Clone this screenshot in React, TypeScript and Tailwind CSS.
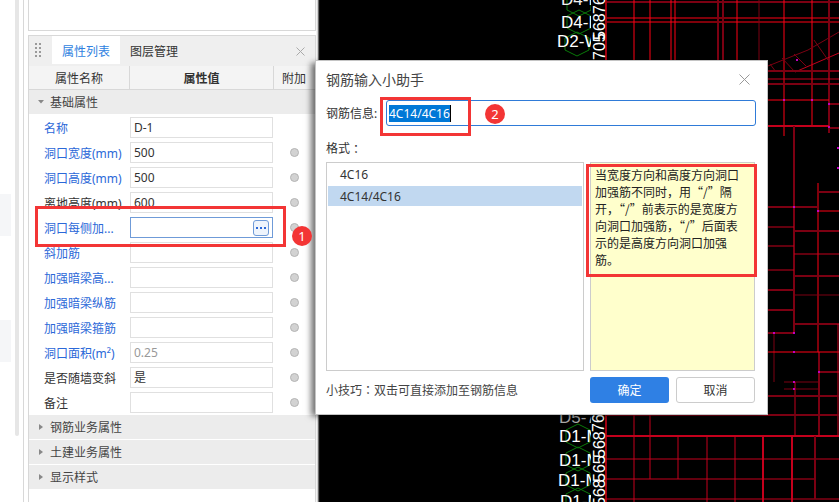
const RED = "#ff0014";
const MID = "#c4001c";
const DIM = "#7c0012";

// x1, y1, x2, y2, colour, width
type Seg = [number, number, number, number, string, number?];

const SEGS: Seg[] = [
  // upper band
  [606, 2, 839, 2, DIM, 2],
  [606, 18, 839, 18, RED],
  [606, 22, 839, 22, RED],
  [634, 0, 634, 60, RED],
  [650, 0, 650, 60, RED],
  [671, 0, 671, 60, RED],
  [675, 0, 675, 60, RED],
  [718, 0, 718, 60, DIM, 2],
  [723, 0, 723, 60, DIM, 2],
  [737, 0, 737, 60, RED],
  [759, 0, 759, 60, DIM],
  [784, 0, 784, 136, RED],
  [812, 0, 812, 126, RED],
  [829, 0, 829, 133, DIM, 2],
  // skewed block
  [768, 66, 808, 50, DIM],
  [770, 64, 776, 72, DIM],
  [782, 58, 795, 72, DIM],
  [794, 54, 806, 66, DIM],
  [808, 50, 839, 32, DIM],
  [795, 72, 839, 53, MID],
  [814, 40, 828, 60, DIM],
  // right of the dialog
  [768, 71, 839, 71, DIM, 2],
  [768, 79, 839, 79, MID],
  [768, 84, 839, 84, DIM, 2],
  [768, 100, 829, 100, RED],
  [829, 104, 839, 104, DIM, 2],
  [768, 126, 829, 126, MID, 2],
  [829, 128, 839, 128, DIM, 2],
  [794, 126, 794, 333, DIM, 2],
  [818, 183, 818, 352, RED],
  [819, 352, 819, 436, DIM, 2],
  [818, 192, 839, 192, DIM, 2],
  [818, 211, 839, 211, RED],
  [768, 207, 818, 207, DIM, 2],
  [768, 227, 794, 227, MID],
  [794, 231, 839, 231, DIM, 2],
  [768, 246, 794, 246, MID],
  [794, 254, 839, 254, MID],
  [768, 270, 794, 270, MID],
  [794, 276, 839, 276, DIM, 2],
  [768, 290, 794, 290, DIM, 2],
  [794, 295, 839, 295, DIM],
  [768, 310, 794, 310, DIM, 2],
  [794, 324, 839, 324, DIM, 2],
  [768, 333, 794, 333, DIM, 2],
  [774, 333, 774, 382, DIM],
  [768, 352, 839, 352, RED],
  [819, 372, 839, 372, DIM, 2],
  [838, 324, 838, 436, MID],
  [784, 382, 818, 382, DIM],
  [784, 389, 818, 389, DIM],
  [795, 382, 795, 436, MID],
  [768, 396, 839, 396, DIM, 2],
  // below the dialog
  [606, 0, 606, 502, "#a00010", 2],
  [606, 415, 839, 415, DIM, 2],
  [606, 436, 839, 436, MID, 2],
  [606, 459, 839, 459, MID],
  [606, 479, 815, 479, MID],
  [606, 499, 839, 499, MID],
  [634, 415, 634, 502, MID],
  [650, 415, 650, 479, MID],
  [678, 436, 678, 479, MID],
  [707, 436, 707, 502, MID],
  [735, 436, 735, 502, MID],
  [763, 436, 763, 502, MID, 2],
  [792, 436, 792, 502, MID, 2],
  [815, 436, 815, 499, DIM, 2],
];

const NODES = [
  [784, 100], [812, 100], [829, 104], [829, 127], [794, 207], [818, 211],
  [838, 148], [838, 168], [774, 333], [794, 333], [794, 352], [794, 382],
  [794, 389], [819, 372], [797, 60],
];

const LABELS: [string, number, number, string][] = [
  ["D4-B", 561, 5, "#f2f2f2"],
  ["D4-B", 561, 28, "#ffffff"],
  ["D2-W", 557, 47, "#ffffff"],
  ["D5-7", 559, 423, "#a8a8a8"],
  ["D1-M", 559, 442, "#ffffff"],
  ["D1-M", 559, 466, "#ffffff"],
  ["D1-M", 558, 486, "#ffffff"],
  ["D1-M", 560, 507, "#ffffff"],
];

const HEXES: [number, number][] = [
  [579, 4], [579, 22], [577, 44], [578, 436], [578, 459], [578, 479], [578, 500],
];

// rotated bar marks beside the label column
const MARKS: [string, number, number][] = [
  ["76", 605, 14],
  ["568", 605, 40],
  ["705", 605, 60],
  ["765", 604, 432],
  ["568", 605, 458],
  ["565", 605, 482],
  ["568", 605, 506],
];

function hexPoints(cx: number, cy: number) {
  const r = 12;
  return [
    [cx - r, cy - 6],
    [cx, cy - r],
    [cx + r, cy - 6],
    [cx + r, cy + 6],
    [cx, cy + r],
    [cx - r, cy + 6],
  ]
    .map((p) => p.join(","))
    .join(" ");
}

function CadCanvas() {
  return (
    <div className="h-full flex-1 bg-black">
      <svg viewBox="320 0 519 502" className="block h-full w-full">
        {SEGS.map(([x1, y1, x2, y2, c, w], i) => (
          <line key={i} x1={x1} y1={y1} x2={x2} y2={y2} stroke={c} strokeWidth={w ?? 1} />
        ))}
        {NODES.map(([x, y], i) => (
          <rect key={i} x={x - 1} y={y - 1} width={2} height={2} fill="#c000c0" />
        ))}
        {HEXES.map(([x, y], i) => (
          <polygon key={i} points={hexPoints(x, y)} fill="none" stroke="#0a7a0a" />
        ))}
        {LABELS.map(([t, x, y, c], i) => (
          <text key={i} x={x} y={y} fill={c} fontSize={17} fontFamily="Liberation Sans, sans-serif">
            {t}
          </text>
        ))}
        {/* marks sit on top of the label ends */}
        <rect x={591} y={0} width={14} height={502} fill="black" />
        {MARKS.map(([t, x, y], i) => (
          <text
            key={i}
            transform={`translate(${x} ${y}) rotate(-90)`}
            fill="#ffffff"
            fontSize={16}
            fontFamily="Liberation Sans, sans-serif"
          >
            {t}
          </text>
        ))}
      </svg>
    </div>
  );
}

const BLUE = "text-[#2b68d8]";
const DARK = "text-[#333333]";

const ROWS: { label: string; value?: string; link: boolean; grey?: boolean; noDot?: boolean; active?: boolean }[] = [
  { label: "名称", value: "D-1", link: true, noDot: true },
  { label: "洞口宽度(mm)", value: "500", link: true },
  { label: "洞口高度(mm)", value: "500", link: true },
  { label: "离地高度(mm)", value: "600", link: false },
  { label: "洞口每侧加...", link: true, active: true },
  { label: "斜加筋", link: true },
  { label: "加强暗梁高...", link: true },
  { label: "加强暗梁纵筋", link: true },
  { label: "加强暗梁箍筋", link: true },
  { label: "洞口面积(m²)", value: "0.25", link: true, grey: true },
  { label: "是否随墙变斜", value: "是", link: false },
  { label: "备注", link: false },
];

function PropertyRow({ row }: { row: (typeof ROWS)[number] }) {
  return (
    <div className="flex h-[25px] items-center">
      <div className={`w-[101px] shrink-0 pl-[15px] pt-[2px] whitespace-nowrap ${row.link ? BLUE : DARK}`}>{row.label}</div>
      <div
        className={`flex h-[21px] w-[143px] shrink-0 items-center justify-between border pl-[3px] pr-[3px] ${
          row.active ? "border-[#6f9bd8]" : "border-[#e0e0e0]"
        } ${row.grey ? "text-[#999999]" : DARK}`}
      >
        <span className="pt-px">{row.value}</span>
        {row.active && (
          <span className="flex h-[16px] w-[16px] items-center justify-center gap-[2px] rounded-[3px] border border-[#6f9bd8] bg-[#eef4fc]">
            <i className="h-[2px] w-[2px] bg-[#2b68d8]" />
            <i className="h-[2px] w-[2px] bg-[#2b68d8]" />
            <i className="h-[2px] w-[2px] bg-[#2b68d8]" />
          </span>
        )}
      </div>
      <div className="flex flex-1 justify-center">
        {!row.noDot && <span className="h-[9px] w-[9px] rounded-full border border-[#b4b4b4] bg-[#d2d2d2]" />}
      </div>
    </div>
  );
}

function GroupHeader({ title, open }: { title: string; open?: boolean }) {
  return (
    <div className={`flex h-[24px] items-center bg-[#ececec] text-[#444444] ${open ? "" : "mb-px"}`}>
      <div className="flex w-[21px] justify-end pr-[6px]">
        <svg width="6" height="6" viewBox="0 0 6 6">
          {open ? <polygon points="0,1 6,1 3,4.5" fill="#888888" /> : <polygon points="1,0 5,3 1,6" fill="#888888" />}
        </svg>
      </div>
      <span className="pt-[2px]">{title}</span>
    </div>
  );
}

function PropertyPanel() {
  return (
    <div className="flex h-full w-[288px] shrink-0 flex-col">
      <div className="h-[31px] shrink-0 border-x border-b border-[#d8d8d8]" />
      <div className="mt-[4px] flex-1 border-x border-t border-[#d8d8d8] bg-white">
        <div className="flex h-[30px] items-start bg-[#efefef]">
          <div className="grid w-[23px] grid-cols-[2px_2px] gap-x-[2px] gap-y-[2px] pl-[6px] pt-[7px]">
            {[0, 1, 2, 3, 4, 5, 6, 7].map((i) => (
              <i key={i} className="h-[2px] w-[2px] bg-[#9a9a9a]" />
            ))}
          </div>
          <div className="flex h-[28px] w-[68px] items-center justify-center bg-white pt-[3px] text-[#2f7fe0]">属性列表</div>
          <div className="ml-[10px] flex h-[28px] items-center pt-[3px] text-[#333333]">图层管理</div>
          <svg className="ml-auto mr-[10px] mt-[11px]" width="9" height="9" viewBox="0 0 9 9">
            <path d="M0.5 0.5 L8.5 8.5 M8.5 0.5 L0.5 8.5" stroke="#aaaaaa" fill="none" />
          </svg>
        </div>
        <div className="flex h-[24px] items-center border-b border-[#d8d8d8] bg-[#f4f4f4] text-[#333333]">
          <div className="flex h-full w-[101px] shrink-0 items-center justify-center border-r border-[#d8d8d8] pt-[2px]">属性名称</div>
          <div className="flex h-full w-[144px] shrink-0 items-center justify-center border-r border-[#d8d8d8] pt-[2px] font-bold">属性值</div>
          <div className="flex-1 pl-[8px] pt-[2px] whitespace-nowrap">附加</div>
        </div>
        <GroupHeader title="基础属性" open />
        <div className="pt-px">
          {ROWS.map((row) => (
            <PropertyRow key={row.label} row={row} />
          ))}
        </div>
        <GroupHeader title="钢筋业务属性" />
        <GroupHeader title="土建业务属性" />
        <GroupHeader title="显示样式" />
      </div>
    </div>
  );
}

const HELP_LINES = [
  "当宽度方向和高度方向洞口",
  "加强筋不同时，用“/”隔",
  "开，“/”前表示的是宽度方",
  "向洞口加强筋，“/”后面表",
  "示的是高度方向洞口加强",
  "筋。",
];

// traditional-form glyphs centre the colon in its cell
function Colon() {
  return <span className="font-['Noto_Sans_CJK_TC',sans-serif]">：</span>;
}

function RebarDialog() {
  return (
    <div className="absolute left-[315px] top-[60px] flex h-[355px] w-[453px] flex-col border border-[#c4c4c4] bg-white px-[10px] text-[#333333] shadow-[-5px_2px_6px_-1px_rgba(0,0,0,0.55)]">
      <div className="flex h-[39px] shrink-0 items-center justify-between pb-[2px] text-[14px] text-[#444444]">
        钢筋输入小助手
        <svg className="mr-[7px]" width="11" height="11" viewBox="0 0 11 11">
          <path d="M0.5 0.5 L10.5 10.5 M10.5 0.5 L0.5 10.5" stroke="#999999" fill="none" />
        </svg>
      </div>
      <div className="flex h-[26px] shrink-0 items-center">
        <span className="w-[60px] shrink-0 pt-px">钢筋信息:</span>
        <div className="flex h-full w-[370px] items-center rounded-[3px] border border-[#2f7bd8] pl-[2px]">
          <span className="bg-[#0078d7] pt-px leading-[16px] text-white">4C14/4C16</span>
          <i className="h-[17px] w-px bg-black" />
        </div>
      </div>
      <div className="flex h-[36px] shrink-0 items-center pt-[10px]">
        格式
        <Colon />
      </div>
      <div className="flex h-[209px] shrink-0 gap-[6px]">
        <div className="flex w-[258px] flex-col gap-[2px] border border-[#cccccc] p-px">
          <div className="flex h-[20px] items-center pl-[12px] pt-px">4C16</div>
          <div className="flex h-[20px] items-center bg-[#c1d8f0] pl-[12px] pt-px">4C14/4C16</div>
        </div>
        <div className="w-[165px] border border-[#cccccc] bg-[#ffffcc] pl-[4px] pt-[3px] font-['Noto_Sans_CJK_SC',sans-serif] leading-[17px] text-[#222222]">
          {HELP_LINES.map((line) => (
            <div key={line} className="whitespace-nowrap">
              {line}
            </div>
          ))}
        </div>
      </div>
      <div className="mt-[6px] flex h-[26px] shrink-0 items-center">
        <span className="w-[264px] shrink-0 pt-px text-[#444444]">
          小技巧
          <Colon />
          双击可直接添加至钢筋信息
        </span>
        <button className="h-full w-[79px] rounded-[3px] bg-[#2f80e4] pt-px text-white">确定</button>
        <button className="ml-[7px] h-full w-[79px] rounded-[3px] border border-[#cccccc] bg-white pt-px">取消</button>
      </div>
    </div>
  );
}

export default function App() {
  return (
    <div className="relative flex h-[502px] w-[839px] overflow-hidden bg-white font-['Noto_Sans','Noto_Sans_CJK_SC',sans-serif] text-[12px] leading-none">
      {/* left gutter */}
      <div className="flex h-full w-[28px] shrink-0">
        <div className="flex w-[11px] flex-col gap-[84px] pt-[194px]">
          <div className="h-[42px] bg-[#f5f6f8]" />
          <div className="h-[42px] bg-[#f5f6f8]" />
        </div>
        <div className="ml-[4px] h-[436px] w-[4px] rounded-b-sm bg-[#e6e6e6]" />
        <div className="ml-[4px] h-full w-px bg-[#d8d8d8]" />
      </div>
      <PropertyPanel />
      <div className="h-full w-[4px] shrink-0 bg-gradient-to-r from-[#f4f4f4] from-30% to-black" />
      <CadCanvas />
      <RebarDialog />

      {/* callouts */}
      <div className="absolute left-[35px] top-[206px] h-[41px] w-[251px] border-[3px] border-[#f33535]" />
      <div className="absolute left-[380px] top-[97px] h-[39px] w-[91px] border-[3px] border-[#f33535]" />
      <div className="absolute left-[586px] top-[164px] h-[113px] w-[171px] border-[3px] border-[#f33535]" />
      <div className="absolute left-[292px] top-[226px] flex h-[20px] w-[20px] items-center justify-center rounded-full bg-[#f33535] text-[13px] text-white">
        1
      </div>
      <div className="absolute left-[485px] top-[104px] flex h-[20px] w-[20px] items-center justify-center rounded-full bg-[#f33535] text-[13px] text-white">
        2
      </div>
    </div>
  );
}
